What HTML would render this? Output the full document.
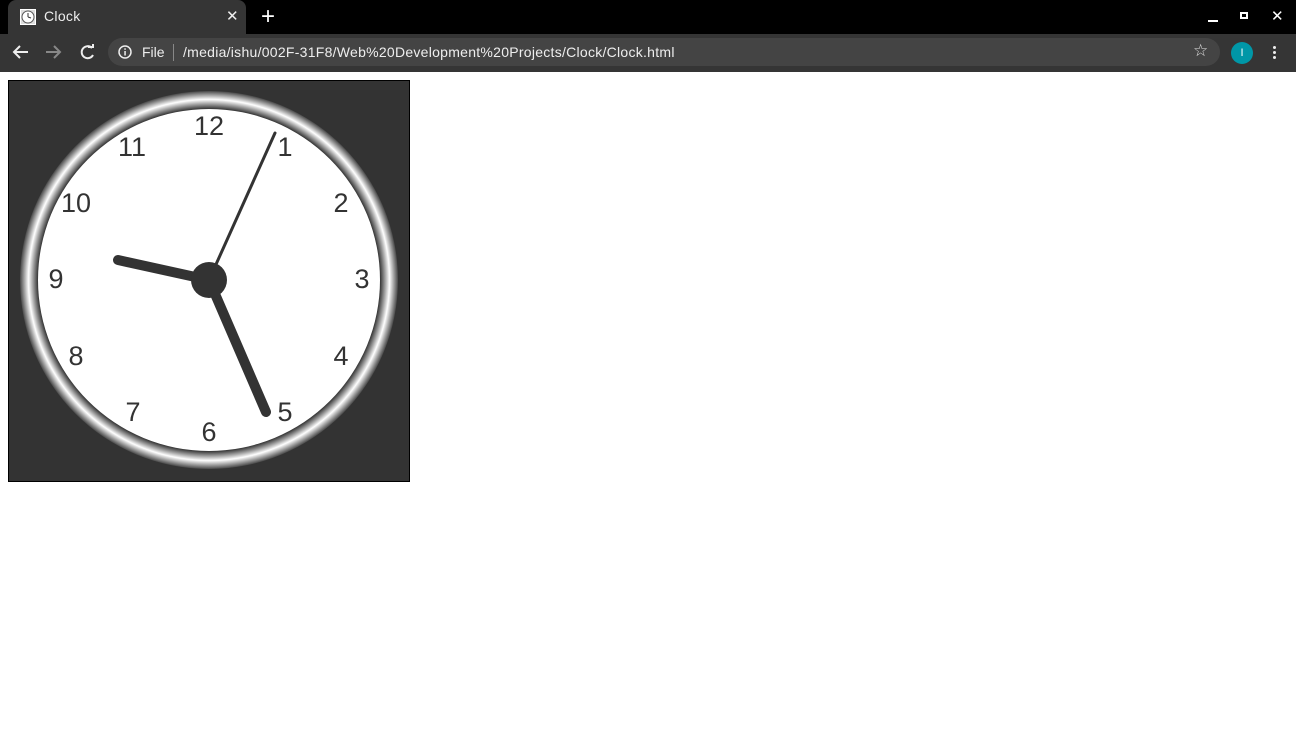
<!DOCTYPE html>
<html><head><style>
body{margin:0;width:1296px;height:741px;background:#fff;font-family:"Liberation Sans",sans-serif;overflow:hidden;position:relative}
.top{position:absolute;left:0;top:0;width:1296px;height:34px;background:#000}
.tab{position:absolute;left:8px;top:0;width:238px;height:34px;background:#353535;border-radius:8px 8px 0 0;color:#eee;font-size:14px}
.bar{position:absolute;left:0;top:34px;width:1296px;height:38px;background:#353535}
.omni{position:absolute;left:108px;top:4px;width:1112px;height:28px;background:#444;border-radius:14px;color:#eee;font-size:14px}
</style></head><body>
<div class="top"></div>
<div class="tab">
 <svg style="position:absolute;left:12px;top:9px" width="16" height="16"><rect x="0.5" y="0.5" width="15" height="15" fill="#ddd" stroke="#fff"/><circle cx="8" cy="8" r="6" fill="#fff" stroke="#555"/><path d="M8 8L8 4M8 8L11 9" stroke="#333"/></svg>
 <span style="position:absolute;left:36px;top:8px;letter-spacing:0.3px">Clock</span>
 <span style="position:absolute;left:218px;top:7px;font-size:15px">✕</span>
</div>
<span style="position:absolute;left:261px;top:3px;color:#fff;font-size:24px">+</span>
<div style="position:absolute;left:1208px;top:20px;width:10px;height:2px;background:#fff"></div>
<div style="position:absolute;left:1240px;top:12px;width:8px;height:7px;border:2px solid #fff;box-sizing:border-box"></div>
<span style="position:absolute;left:1271px;top:7px;color:#fff;font-size:15px">✕</span>
<div class="bar">
 <svg style="position:absolute;left:12px;top:10px" width="100" height="18" fill="none" stroke-width="2"><path d="M2 8H16M8 2L2 8L8 14" stroke="#eee"/><path d="M34 8H48M42 2L48 8L42 14" stroke="#888"/><path d="M80 4A6 6 0 1 0 81 11" stroke="#eee"/><path d="M76 3L81 3L81 -1" stroke="#eee"/></svg>
 <div class="omni">
  <svg style="position:absolute;left:10px;top:7px" width="14" height="14"><circle cx="7" cy="7" r="6" fill="none" stroke="#eee" stroke-width="1.5"/><rect x="6.3" y="6" width="1.5" height="4.5" fill="#eee"/><rect x="6.3" y="3.3" width="1.5" height="1.5" fill="#eee"/></svg>
  <span style="position:absolute;left:34px;top:6px">File</span>
  <div style="position:absolute;left:65px;top:6px;width:1px;height:17px;background:#888"></div>
  <span style="position:absolute;left:75px;top:6px;letter-spacing:0.27px">/media/ishu/002F-31F8/Web%20Development%20Projects/Clock/Clock.html</span>
  <span style="position:absolute;left:1085px;top:3px;font-size:17px;color:#ddd">☆</span>
 </div>
 <div style="position:absolute;left:1231px;top:8px;width:22px;height:22px;border-radius:50%;background:#0097a7;color:#fff;font-size:11px;text-align:center;line-height:22px">I</div>
 <div style="position:absolute;left:1273px;top:12px;width:3px;height:3px;background:#eee;border-radius:50%;box-shadow:0 5px 0 #eee,0 10px 0 #eee"></div>
</div>
<svg style="position:absolute;left:8px;top:80px" width="402" height="402">
 <defs><radialGradient id="g" cx="201" cy="200" r="190" gradientUnits="userSpaceOnUse">
  <stop offset="0.9" stop-color="#333"/><stop offset="0.95" stop-color="#fff"/><stop offset="1" stop-color="#333"/></radialGradient></defs>
 <rect x="0.5" y="0.5" width="401" height="401" fill="#333" stroke="#000"/>
 <circle cx="201" cy="200" r="189" fill="url(#g)"/>
 <circle cx="201" cy="200" r="171" fill="#fff"/>
 <g font-size="27" fill="#333" text-anchor="middle" font-family="Liberation Sans,sans-serif">
  <text x="201" y="55">12</text><text x="277" y="76">1</text><text x="333" y="132">2</text><text x="354" y="208">3</text><text x="333" y="285">4</text><text x="277" y="341">5</text><text x="201" y="361">6</text><text x="125" y="341">7</text><text x="68" y="285">8</text><text x="48" y="208">9</text><text x="68" y="132">10</text><text x="124" y="76">11</text>
 </g>
 <g stroke="#333" stroke-linecap="round">
  <line x1="201" y1="200" x2="110" y2="180" stroke-width="10"/>
  <line x1="201" y1="200" x2="258" y2="332" stroke-width="10"/>
  <line x1="201" y1="200" x2="267" y2="53" stroke-width="3"/>
 </g>
 <circle cx="201" cy="200" r="18" fill="#333"/>
</svg>
</body></html>
